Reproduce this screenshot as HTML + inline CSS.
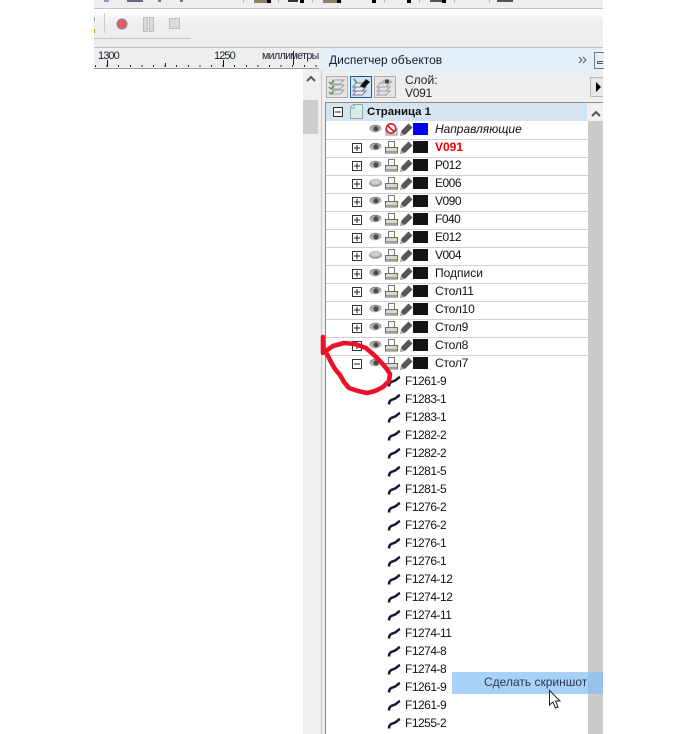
<!DOCTYPE html>
<html><head><meta charset="utf-8">
<style>
html,body{margin:0;padding:0;background:#fff;width:696px;height:734px;overflow:hidden}
body{position:relative;font-family:"Liberation Sans",sans-serif;font-size:12px;color:#000}
.a{position:absolute}
.t{position:absolute;white-space:nowrap;line-height:18px;height:18px;font-size:12px;color:#111}
.l{position:absolute;left:326px;width:262px;height:1px;background:#d0d0d0}
svg{position:absolute;overflow:visible}
.n{left:435px;margin-top:-1px}
.d{letter-spacing:-.5px}
.o{letter-spacing:-.2px}
.c{left:405px;color:#1a0a20;font-size:12px;letter-spacing:-.5px;margin-top:-1px}
.s{position:absolute;left:413px;width:15px;height:12px;background:#141414}
</style></head><body>
<svg width="0" height="0" style="position:absolute"><defs>
<symbol id="plus" viewBox="0 0 10 10"><rect x=".5" y=".5" width="9" height="9" fill="#fff" stroke="#333"/><path d="M2 5h6M5 2v6" stroke="#222"/></symbol>
<symbol id="minus" viewBox="0 0 10 10"><rect x=".5" y=".5" width="9" height="9" fill="#fff" stroke="#333"/><path d="M2 5h6" stroke="#222"/></symbol>
<symbol id="eye" viewBox="0 0 13 10"><path d="M0 5C3 1 9 0 13 5C9 9.500 3 9.500 0 5Z" fill="#b0b0b0"/><circle cx="7" cy="4.800" r="2.600" fill="#4a4a4a"/><path d="M1 3.500C4 .5 9 .5 12 3.500" stroke="#808080" fill="none"/></symbol>
<symbol id="off" viewBox="0 0 13 10"><ellipse cx="6.500" cy="5" rx="6.500" ry="4" fill="#a6a6a6"/><ellipse cx="6.500" cy="4" rx="5" ry="2.500" fill="#cfcfcf"/></symbol>
<symbol id="pr" viewBox="0 0 13 13"><path d="M3.500 .5h6v6h-6z" fill="#fff" stroke="#777"/><path d="M.5 6.500h12v5.500H.5z" fill="#d8d8d8" stroke="#6c6c6c"/><path d="M1 10.500h11" stroke="#999"/><path d="M9 8h3" stroke="#e8e050"/></symbol>
<symbol id="pen" viewBox="0 0 13 13"><path d="M0 13L1.500 7.500L8.500 .5L12.500 4.500L5.500 11.500Z" fill="#55555f"/><path d="M0 13L1.500 9.500L3.500 11.500Z" fill="#b0b0b0"/></symbol>
<symbol id="cv" viewBox="0 0 15 13"><path d="M2 11.500C2 7.500 4 7 7 6C10 5 10.500 3 13 2" fill="none" stroke="#1c1a38" stroke-width="2.500"/></symbol>
</defs></svg>

<!-- panel base -->
<div class="a" style="left:94px;top:0;width:509px;height:734px;background:#eee"></div>
<!-- top row -->
<div class="a" style="left:94px;top:8px;width:509px;height:1px;background:#c4c4c4"></div>
<div class="a" style="left:94px;top:9px;width:509px;height:15px;background:linear-gradient(#fff,#eee)"></div>
<div class="a" style="left:104px;top:0;width:5px;height:2px;background:#9a94c4"></div>
<div class="a" style="left:127px;top:0;width:16px;height:2px;background:#666a80"></div>
<div class="a" style="left:158px;top:0;width:3px;height:2px;background:#777"></div>
<div class="a" style="left:180px;top:0;width:3px;height:2px;background:#777"></div>
<div class="a" style="left:243px;top:0;width:1px;height:3px;background:#bbb"></div>
<div class="a" style="left:254px;top:0;width:16px;height:3px;background:#8a8468"></div>
<div class="a" style="left:267px;top:0;width:4px;height:3px;background:#000"></div>
<div class="a" style="left:278px;top:0;width:1px;height:3px;background:#bbb"></div>
<div class="a" style="left:288px;top:0;width:10px;height:2px;background:#333"></div>
<div class="a" style="left:300px;top:0;width:4px;height:3px;background:#000"></div>
<div class="a" style="left:312px;top:0;width:1px;height:3px;background:#bbb"></div>
<div class="a" style="left:323px;top:0;width:16px;height:3px;background:#8a8468"></div>
<div class="a" style="left:337px;top:0;width:4px;height:3px;background:#000"></div>
<div class="a" style="left:372px;top:0;width:4px;height:3px;background:#000"></div>
<div class="a" style="left:384px;top:0;width:1px;height:3px;background:#bbb"></div>
<div class="a" style="left:407px;top:0;width:4px;height:3px;background:#000"></div>
<div class="a" style="left:419px;top:0;width:1px;height:3px;background:#bbb"></div>
<div class="a" style="left:430px;top:0;width:14px;height:2px;background:#555"></div>
<div class="a" style="left:442px;top:0;width:4px;height:3px;background:#000"></div>
<div class="a" style="left:454px;top:0;width:1px;height:3px;background:#bbb"></div>
<div class="a" style="left:489px;top:0;width:1px;height:3px;background:#bbb"></div>
<div class="a" style="left:497px;top:0;width:16px;height:2px;background:#555"></div>
<!-- second toolbar -->
<div class="a" style="left:94px;top:17px;width:1px;height:4px;background:#999"></div>
<div class="a" style="left:94px;top:29px;width:1px;height:4px;background:#e88a10"></div>
<div class="a" style="left:104px;top:13px;width:1px;height:20px;background:#ccc"></div>
<svg style="left:116px;top:18px" width="13" height="12"><circle cx="6" cy="6" r="5" fill="#ec5a62" stroke="#7f7f98"/></svg>
<div class="a" style="left:143px;top:17px;width:3px;height:13px;background:#d9d9d9;border:1px solid #bdbdbd"></div>
<div class="a" style="left:149px;top:17px;width:3px;height:13px;background:#d9d9d9;border:1px solid #bdbdbd"></div>
<div class="a" style="left:171px;top:20px;width:9px;height:9px;background:#c6c6c6"></div>
<div class="a" style="left:169px;top:18px;width:9px;height:9px;background:#dcdcdc;border:1px solid #c0c0c0"></div>
<div class="a" style="left:94px;top:38px;width:97px;height:1px;background:#c4c4c4"></div>
<div class="a" style="left:94px;top:47px;width:509px;height:1px;background:#c0c0c0"></div>
<!-- ruler -->
<div class="t" style="left:98px;top:47px;font-size:11px;letter-spacing:-.9px;color:#123">1300</div>
<div class="t" style="left:214px;top:47px;font-size:11px;letter-spacing:-.9px;color:#123">1250</div>
<div class="t" style="left:262px;top:47px;font-size:10.6px;letter-spacing:-.6px;color:#223">миллиметры</div>
<div class="a" style="left:95px;top:65px;width:224px;height:2px;background:repeating-linear-gradient(90deg,#333 0,#333 1px,transparent 1px,transparent 11.6px)"></div>
<div class="a" style="left:107px;top:60px;width:1px;height:7px;background:#111"></div>
<div class="a" style="left:223px;top:60px;width:1px;height:7px;background:#111"></div>
<div class="a" style="left:165px;top:63px;width:1px;height:4px;background:#333"></div>
<div class="a" style="left:293px;top:51px;width:1px;height:14px;background:#222"></div>
<div class="a" style="left:94px;top:68px;width:225px;height:1px;background:#999"></div>
<!-- canvas -->
<div class="a" style="left:94px;top:69px;width:209px;height:665px;background:#fff"></div>
<!-- left scrollbar -->
<div class="a" style="left:303px;top:69px;width:15px;height:665px;background:#f0f0f0"></div>
<svg style="left:306px;top:75px" width="10" height="7"><path d="M1 6L5 2L9 6" fill="none" stroke="#555" stroke-width="2"/></svg>
<div class="a" style="left:303px;top:100px;width:15px;height:34px;background:#cdcdcd"></div>
<div class="a" style="left:321px;top:70px;width:1px;height:664px;background:#c9c9c9"></div>
<!-- docker title -->
<div class="a" style="left:322px;top:48px;width:281px;height:23px;background:#e2eef8"></div>
<div class="t" style="left:329px;top:51px;font-size:12px;color:#1a1a30">Диспетчер объектов</div>
<svg style="left:578px;top:56px" width="9" height="8"><path d="M1 1L3.800 4L1 7M5 1L7.800 4L5 7" fill="none" stroke="#666" stroke-width="1.200"/></svg>
<div class="a" style="left:594px;top:52px;width:9px;height:15px;background:#e8eef4;border:1px solid #6a7a8a;border-right:0"></div>
<div class="a" style="left:597px;top:61px;width:6px;height:3px;border:1px solid #555;border-right:0;box-sizing:border-box"></div>
<!-- tool buttons -->
<div class="a" style="left:326px;top:76px;width:20px;height:20px;background:#e4e4e4;border:1px solid #adadad"></div>
<div class="a" style="left:350px;top:76px;width:20px;height:20px;background:#cfe4f6;border:1px solid #1c5a90"></div>
<div class="a" style="left:374px;top:76px;width:20px;height:20px;background:#e4e4e4;border:1px solid #adadad"></div>
<svg style="left:328px;top:78px" width="18" height="18"><path d="M5 3h11l-4 4H3zM5 8h11l-4 4H3zM5 13h11l-4 4H3z" fill="#e2e2e2" stroke="#a0a0a8" transform="translate(0 -1)"/><path d="M1 4l2 2 3-3M1 9l2 2 3-3M1 14l2 2 3-3" fill="none" stroke="#5aa050" stroke-width="1.500"/></svg>
<svg style="left:352px;top:78px" width="18" height="18"><path d="M4 5h10l-4 4H1zM4 9h10l-4 4H1zM4 13h10l-4 4H1z" fill="#e6eef4" stroke="#778"/><path d="M8 8L14 1L18 4L12 10Z" fill="#111"/><path d="M2 1l3 4" stroke="#4a9a40" stroke-width="1.500"/></svg>
<svg style="left:376px;top:78px" width="18" height="18"><path d="M4 5h10l-4 4H1zM4 9h10l-4 4H1zM4 13h10l-4 4H1z" fill="#e2e2e2" stroke="#a0a0a8"/><path d="M5 4C8 0 13 0 17 4C13 7 8 7 5 4Z" fill="#b4b4b4"/><circle cx="11" cy="3.500" r="2" fill="#444"/></svg>
<div class="t" style="left:405px;top:71px;color:#222">Слой:</div>
<div class="t" style="left:405px;top:84px;color:#222;letter-spacing:-.3px">V091</div>
<div class="a" style="left:590px;top:77px;width:13px;height:20px;background:#e8e8e8;border:1px solid #b8b8b8;border-right:0;box-sizing:border-box"></div>
<svg style="left:596px;top:82px" width="6" height="10"><path d="M0 0L5 5L0 10Z" fill="#000"/></svg>
<!-- list -->
<div class="a" style="left:325px;top:102px;width:278px;height:632px;background:#fff;border-left:1px solid #8c8c8c;border-top:1px solid #8c8c8c;box-sizing:border-box"></div>
<div class="a" style="left:326px;top:103px;width:261px;height:18px;background:#d6e4f0"></div>
<div class="a" style="left:587px;top:103px;width:16px;height:18px;background:#f0f0f0"></div>
<svg style="left:591px;top:110px" width="10" height="7"><path d="M1 6L5 2L9 6" fill="none" stroke="#555" stroke-width="2"/></svg>
<div class="a" style="left:588px;top:121px;width:15px;height:613px;background:#cbcbcb"></div>
<svg style="left:333px;top:107px" width="10" height="10"><use href="#minus"/></svg>
<svg style="left:350px;top:104px" width="13" height="15"><path d="M.5 3.500L3.500 .5H12.500V14.500H.5Z" fill="#d8ece6" stroke="#8aa"/><path d="M1 4h3V1" fill="#fff" stroke="#8aa"/></svg>
<div class="t" style="left:367px;top:103px;font-weight:bold;font-size:11.4px">Страница 1</div>

<!-- row 0 -->
<svg style="left:369px;top:124px" width="13" height="10"><use href="#eye"/></svg>
<svg style="left:385px;top:123px" width="13" height="13"><path d="M1 6h11v6H1z" fill="#eee" stroke="#888"/><circle cx="6" cy="5.500" r="4.700" fill="#fff" stroke="#d01818" stroke-width="1.600"/><path d="M3 3L9 8.500" stroke="#d01818" stroke-width="1.600"/></svg>
<svg style="left:400px;top:123px" width="13" height="13"><use href="#pen"/></svg>
<div class="a" style="left:413px;top:123px;width:15px;height:12px;background:#0000f5"></div>
<div class="t n" style="top:121px;font-style:italic">Направляющие</div>
<div class="l" style="top:139px"></div>

<!-- rows -->
<svg style="left:352px;top:143px" width="10" height="10"><use href="#plus"/></svg><svg style="left:369px;top:142px" width="13" height="10"><use href="#eye"/></svg><svg style="left:385px;top:141px" width="13" height="13"><use href="#pr"/></svg><svg style="left:400px;top:141px" width="13" height="13"><use href="#pen"/></svg><div class="s" style="top:141px"></div><div class="t n" style="top:139px;color:#f00000;font-weight:bold;font-size:12px">V091</div><div class="l" style="top:157px"></div>

<svg style="left:352px;top:161px" width="10" height="10"><use href="#plus"/></svg><svg style="left:369px;top:160px" width="13" height="10"><use href="#eye"/></svg><svg style="left:385px;top:159px" width="13" height="13"><use href="#pr"/></svg><svg style="left:400px;top:159px" width="13" height="13"><use href="#pen"/></svg><div class="s" style="top:159px"></div><div class="t n d" style="top:157px">P012</div><div class="l" style="top:175px"></div>

<svg style="left:352px;top:179px" width="10" height="10"><use href="#plus"/></svg><svg style="left:369px;top:178px" width="13" height="10"><use href="#off"/></svg><svg style="left:385px;top:177px" width="13" height="13"><use href="#pr"/></svg><svg style="left:400px;top:177px" width="13" height="13"><use href="#pen"/></svg><div class="s" style="top:177px"></div><div class="t n d" style="top:175px">E006</div><div class="l" style="top:193px"></div>

<svg style="left:352px;top:197px" width="10" height="10"><use href="#plus"/></svg><svg style="left:369px;top:196px" width="13" height="10"><use href="#eye"/></svg><svg style="left:385px;top:195px" width="13" height="13"><use href="#pr"/></svg><svg style="left:400px;top:195px" width="13" height="13"><use href="#pen"/></svg><div class="s" style="top:195px"></div><div class="t n d" style="top:193px">V090</div><div class="l" style="top:211px"></div>

<svg style="left:352px;top:215px" width="10" height="10"><use href="#plus"/></svg><svg style="left:369px;top:214px" width="13" height="10"><use href="#eye"/></svg><svg style="left:385px;top:213px" width="13" height="13"><use href="#pr"/></svg><svg style="left:400px;top:213px" width="13" height="13"><use href="#pen"/></svg><div class="s" style="top:213px"></div><div class="t n d" style="top:211px">F040</div><div class="l" style="top:229px"></div>

<svg style="left:352px;top:233px" width="10" height="10"><use href="#plus"/></svg><svg style="left:369px;top:232px" width="13" height="10"><use href="#eye"/></svg><svg style="left:385px;top:231px" width="13" height="13"><use href="#pr"/></svg><svg style="left:400px;top:231px" width="13" height="13"><use href="#pen"/></svg><div class="s" style="top:231px"></div><div class="t n d" style="top:229px">E012</div><div class="l" style="top:247px"></div>

<svg style="left:352px;top:251px" width="10" height="10"><use href="#plus"/></svg><svg style="left:369px;top:250px" width="13" height="10"><use href="#off"/></svg><svg style="left:385px;top:249px" width="13" height="13"><use href="#pr"/></svg><svg style="left:400px;top:249px" width="13" height="13"><use href="#pen"/></svg><div class="s" style="top:249px"></div><div class="t n d" style="top:247px">V004</div><div class="l" style="top:265px"></div>

<svg style="left:352px;top:269px" width="10" height="10"><use href="#plus"/></svg><svg style="left:369px;top:268px" width="13" height="10"><use href="#eye"/></svg><svg style="left:385px;top:267px" width="13" height="13"><use href="#pr"/></svg><svg style="left:400px;top:267px" width="13" height="13"><use href="#pen"/></svg><div class="s" style="top:267px"></div><div class="t n" style="top:265px">Подписи</div><div class="l" style="top:283px"></div>

<svg style="left:352px;top:287px" width="10" height="10"><use href="#plus"/></svg><svg style="left:369px;top:286px" width="13" height="10"><use href="#eye"/></svg><svg style="left:385px;top:285px" width="13" height="13"><use href="#pr"/></svg><svg style="left:400px;top:285px" width="13" height="13"><use href="#pen"/></svg><div class="s" style="top:285px"></div><div class="t n o" style="top:283px">Стол11</div><div class="l" style="top:301px"></div>

<svg style="left:352px;top:305px" width="10" height="10"><use href="#plus"/></svg><svg style="left:369px;top:304px" width="13" height="10"><use href="#eye"/></svg><svg style="left:385px;top:303px" width="13" height="13"><use href="#pr"/></svg><svg style="left:400px;top:303px" width="13" height="13"><use href="#pen"/></svg><div class="s" style="top:303px"></div><div class="t n o" style="top:301px">Стол10</div><div class="l" style="top:319px"></div>

<svg style="left:352px;top:323px" width="10" height="10"><use href="#plus"/></svg><svg style="left:369px;top:322px" width="13" height="10"><use href="#eye"/></svg><svg style="left:385px;top:321px" width="13" height="13"><use href="#pr"/></svg><svg style="left:400px;top:321px" width="13" height="13"><use href="#pen"/></svg><div class="s" style="top:321px"></div><div class="t n o" style="top:319px">Стол9</div><div class="l" style="top:337px"></div>

<svg style="left:352px;top:341px" width="10" height="10"><use href="#plus"/></svg><svg style="left:369px;top:340px" width="13" height="10"><use href="#eye"/></svg><svg style="left:385px;top:339px" width="13" height="13"><use href="#pr"/></svg><svg style="left:400px;top:339px" width="13" height="13"><use href="#pen"/></svg><div class="s" style="top:339px"></div><div class="t n o" style="top:337px">Стол8</div><div class="l" style="top:355px"></div>

<svg style="left:352px;top:359px" width="10" height="10"><use href="#minus"/></svg><svg style="left:369px;top:358px" width="13" height="10"><use href="#eye"/></svg><svg style="left:385px;top:357px" width="13" height="13"><use href="#pr"/></svg><svg style="left:400px;top:357px" width="13" height="13"><use href="#pen"/></svg><div class="s" style="top:357px"></div><div class="t n o" style="top:355px">Стол7</div>

<!-- children -->
<svg style="left:387px;top:375px" width="15" height="13"><use href="#cv"/></svg><div class="t c" style="top:373px">F1261-9</div>
<svg style="left:387px;top:393px" width="15" height="13"><use href="#cv"/></svg><div class="t c" style="top:391px">F1283-1</div>
<svg style="left:387px;top:411px" width="15" height="13"><use href="#cv"/></svg><div class="t c" style="top:409px">F1283-1</div>
<svg style="left:387px;top:429px" width="15" height="13"><use href="#cv"/></svg><div class="t c" style="top:427px">F1282-2</div>
<svg style="left:387px;top:447px" width="15" height="13"><use href="#cv"/></svg><div class="t c" style="top:445px">F1282-2</div>
<svg style="left:387px;top:465px" width="15" height="13"><use href="#cv"/></svg><div class="t c" style="top:463px">F1281-5</div>
<svg style="left:387px;top:483px" width="15" height="13"><use href="#cv"/></svg><div class="t c" style="top:481px">F1281-5</div>
<svg style="left:387px;top:501px" width="15" height="13"><use href="#cv"/></svg><div class="t c" style="top:499px">F1276-2</div>
<svg style="left:387px;top:519px" width="15" height="13"><use href="#cv"/></svg><div class="t c" style="top:517px">F1276-2</div>
<svg style="left:387px;top:537px" width="15" height="13"><use href="#cv"/></svg><div class="t c" style="top:535px">F1276-1</div>
<svg style="left:387px;top:555px" width="15" height="13"><use href="#cv"/></svg><div class="t c" style="top:553px">F1276-1</div>
<svg style="left:387px;top:573px" width="15" height="13"><use href="#cv"/></svg><div class="t c" style="top:571px">F1274-12</div>
<svg style="left:387px;top:591px" width="15" height="13"><use href="#cv"/></svg><div class="t c" style="top:589px">F1274-12</div>
<svg style="left:387px;top:609px" width="15" height="13"><use href="#cv"/></svg><div class="t c" style="top:607px">F1274-11</div>
<svg style="left:387px;top:627px" width="15" height="13"><use href="#cv"/></svg><div class="t c" style="top:625px">F1274-11</div>
<svg style="left:387px;top:645px" width="15" height="13"><use href="#cv"/></svg><div class="t c" style="top:643px">F1274-8</div>
<svg style="left:387px;top:663px" width="15" height="13"><use href="#cv"/></svg><div class="t c" style="top:661px">F1274-8</div>
<svg style="left:387px;top:681px" width="15" height="13"><use href="#cv"/></svg><div class="t c" style="top:679px">F1261-9</div>
<svg style="left:387px;top:699px" width="15" height="13"><use href="#cv"/></svg><div class="t c" style="top:697px">F1261-9</div>
<svg style="left:387px;top:717px" width="15" height="13"><use href="#cv"/></svg><div class="t c" style="top:715px">F1255-2</div>

<!-- red scribble -->
<svg style="left:0;top:0" width="696" height="734"><path d="M323 337V353L333 346L344 343L355 344L366 348L374 355L380 361L386 368L390 374L389 381L383 387L375 391L367 393L358 391L349 388L344 382L340 375L335 369L331 362L327 354" fill="none" stroke="#ec1028" stroke-width="4.600" stroke-linejoin="round" stroke-linecap="round"/></svg>

<!-- tooltip -->
<div class="a" style="left:452px;top:672px;width:151px;height:22px;background:rgba(130,190,245,.7)"></div>
<div class="t" style="left:484px;top:673px;color:#2c3a4a">Сделать скриншот</div>
<svg style="left:549px;top:690px" width="12" height="20"><path d="M.5 .5V15L4 12L6.500 18L9 17L6.500 11H11Z" fill="#fff" stroke="#222"/></svg>
</body></html>
